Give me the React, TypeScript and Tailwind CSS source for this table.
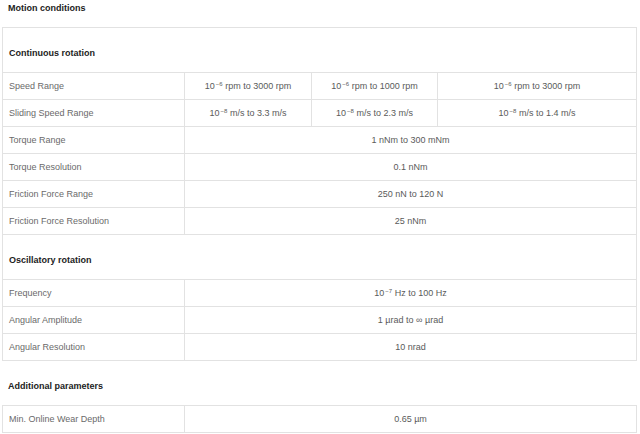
import React from 'react';

type Row = { label: string; values: React.ReactNode[] };

const Exp = ({ base, exp }: { base: string; exp: string }) => (
    <>
        {base}
        <sup className="text-[6px] relative -top-[3px] ml-[1px]">{exp}</sup>
    </>
);

const continuous: Row[] = [
    {
        label: 'Speed Range',
        values: [
            <span><Exp base="10" exp="−6" /> rpm to 3000 rpm</span>,
            <span><Exp base="10" exp="−6" /> rpm to 1000 rpm</span>,
            <span><Exp base="10" exp="−6" /> rpm to 3000 rpm</span>,
        ],
    },
    {
        label: 'Sliding Speed Range',
        values: [
            <span><Exp base="10" exp="−8" /> m/s to 3.3 m/s</span>,
            <span><Exp base="10" exp="−8" /> m/s to 2.3 m/s</span>,
            <span><Exp base="10" exp="−8" /> m/s to 1.4 m/s</span>,
        ],
    },
    { label: 'Torque Range', values: ['1 nNm to 300 mNm'] },
    { label: 'Torque Resolution', values: ['0.1 nNm'] },
    { label: 'Friction Force Range', values: ['250 nN to 120 N'] },
    { label: 'Friction Force Resolution', values: ['25 nNm'] },
];

const oscillatory: Row[] = [
    { label: 'Frequency', values: [<span><Exp base="10" exp="−7" /> Hz to 100 Hz</span>] },
    { label: 'Angular Amplitude', values: ['1 µrad to ∞ µrad'] },
    { label: 'Angular Resolution', values: ['10 nrad'] },
];

const additional: Row[] = [{ label: 'Min. Online Wear Depth', values: ['0.65 µm'] }];

const colWidths = ['w-[127px]', 'w-[126px]', 'w-[198px]'];

function DataRow({ row }: { row: Row }) {
    return (
        <div className="flex h-[27px] border-b border-[#e2e2e2]">
            <div className="w-[182px] shrink-0 border-r border-[#e2e2e2] pl-[6px] flex items-center text-[#6a6a6a]">
                {row.label}
            </div>
            {row.values.length === 1 ? (
                <div className="flex-1 flex items-center justify-center text-[#5a5a5a]">{row.values[0]}</div>
            ) : (
                row.values.map((v, i) => (
                    <div
                        key={i}
                        className={`${colWidths[i]} shrink-0 flex items-center justify-center text-[#5a5a5a] ${i < 2 ? 'border-r border-[#e2e2e2]' : ''}`}
                    >
                        {v}
                    </div>
                ))
            )}
        </div>
    );
}

function SectionHeader({ title }: { title: string }) {
    return (
        <div className="h-[45px] border-b border-[#e2e2e2] pl-[6px] pt-[19px] font-bold text-[#222]">
            {title}
        </div>
    );
}

export default function App() {
    return (
        <div className="w-[640px] h-[434px] bg-white overflow-hidden text-[9px] leading-[12px] font-['Liberation_Sans',Arial,sans-serif]">
            <div className="h-[27px] pl-[8px] pt-[2px] font-bold text-[#222]">Motion conditions</div>
            <div className="ml-[2px] w-[635px] border border-b-0 border-[#e2e2e2]">
                <SectionHeader title="Continuous rotation" />
                {continuous.map((r) => (
                    <DataRow key={r.label} row={r} />
                ))}
                <SectionHeader title="Oscillatory rotation" />
                {oscillatory.map((r) => (
                    <DataRow key={r.label} row={r} />
                ))}
            </div>
            <div className="h-[44px] pl-[8px] pt-[19px] font-bold text-[#222]">Additional parameters</div>
            <div className="ml-[2px] w-[635px] border border-b-0 border-[#e2e2e2]">
                {additional.map((r) => (
                    <DataRow key={r.label} row={r} />
                ))}
            </div>
        </div>
    );
}
